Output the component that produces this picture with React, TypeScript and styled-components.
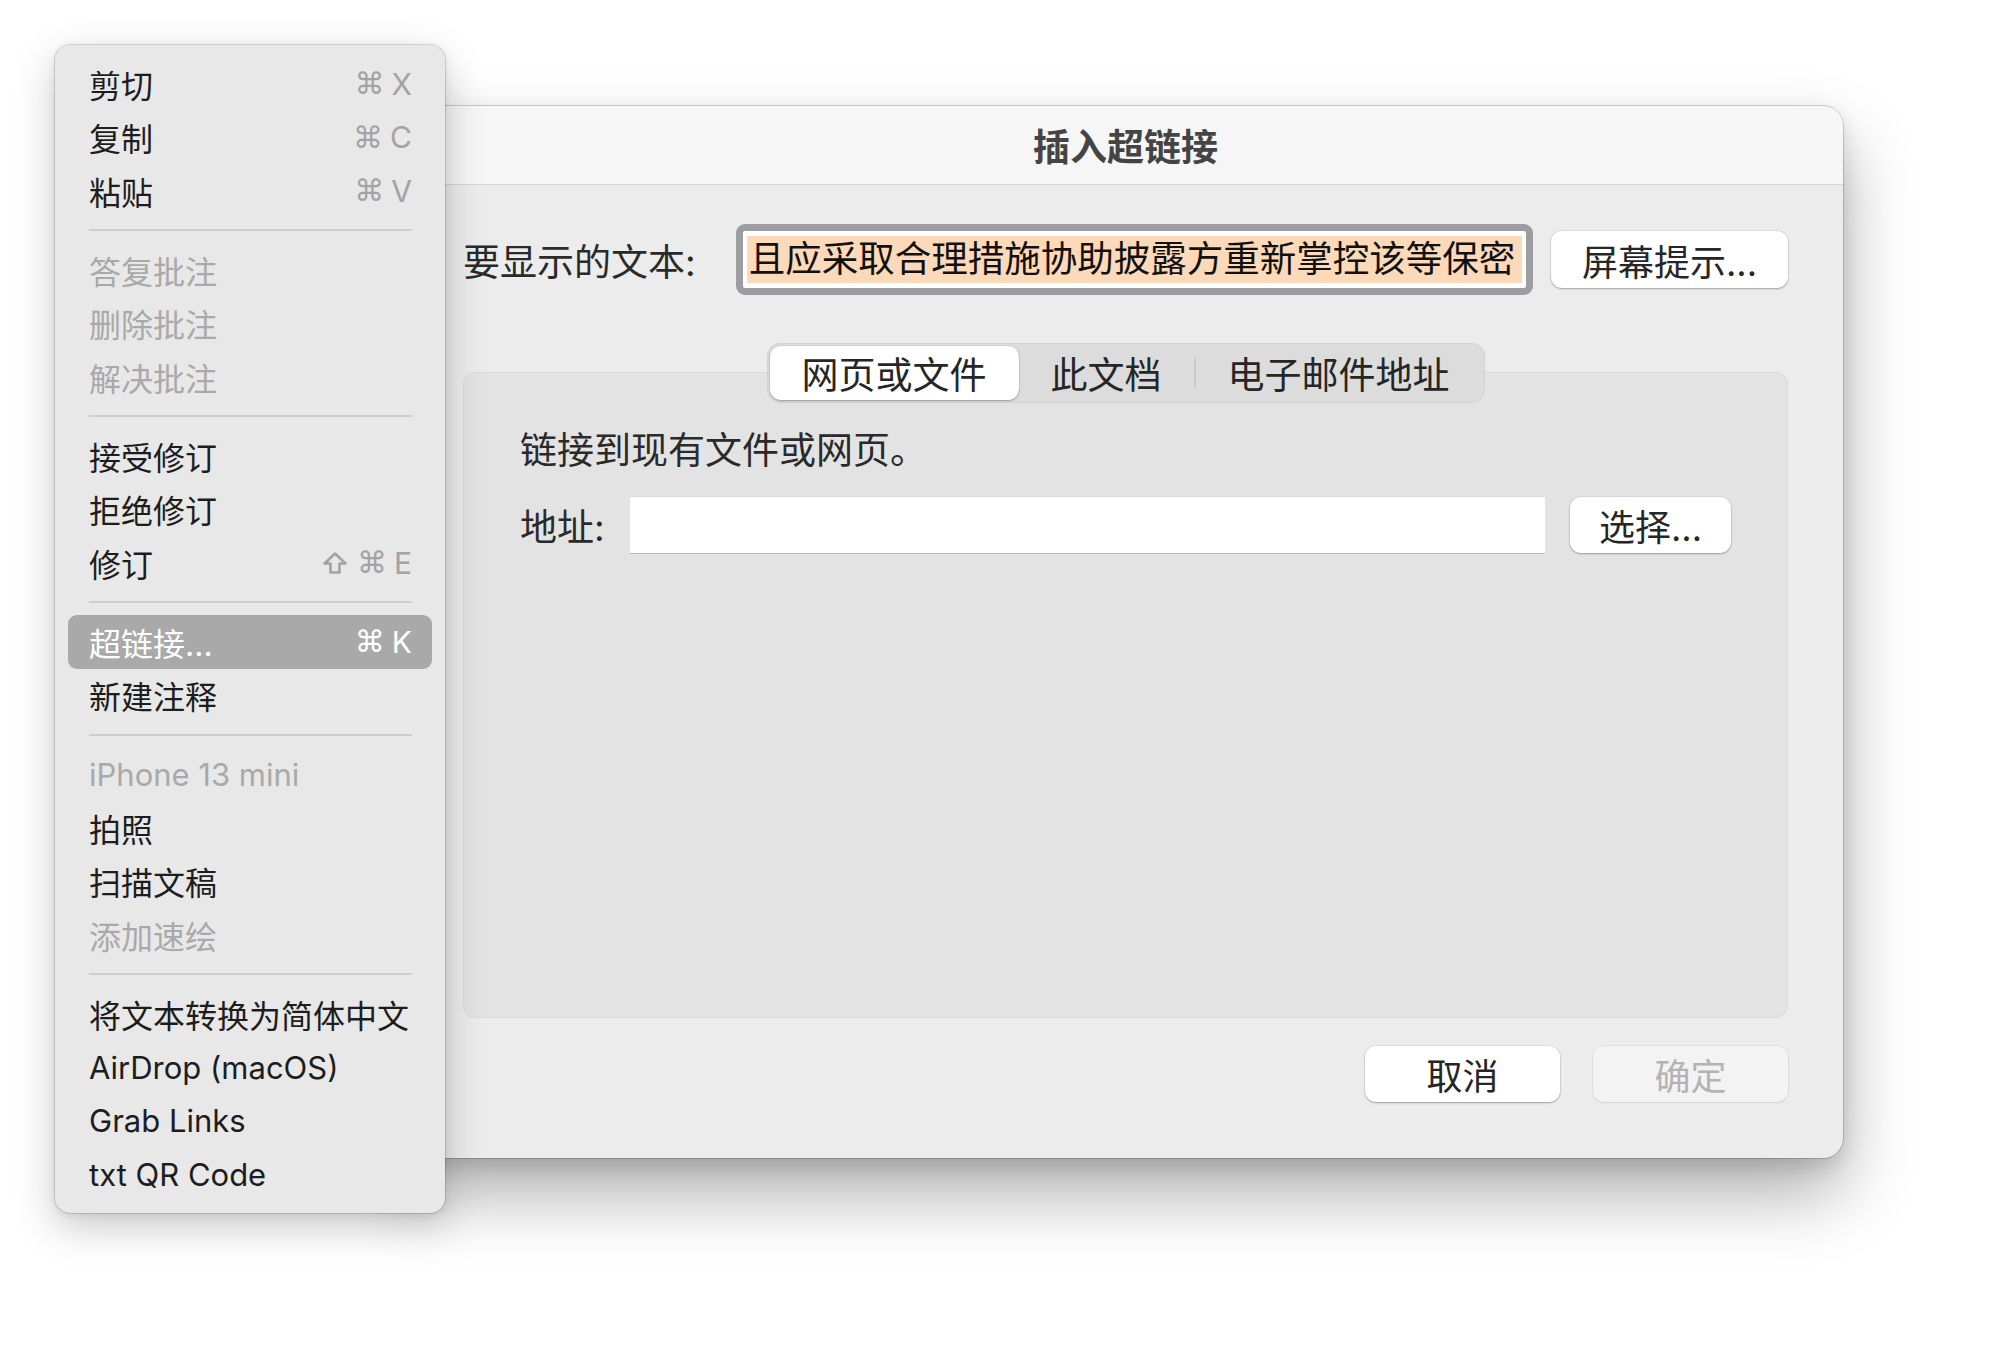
import React from "react"
import styled, { createGlobalStyle } from "styled-components"

const GlobalStyle = createGlobalStyle`
    html, body {
        margin: 0;
        padding: 0;
        background: #ffffff;
    }
    body {
        font-family: Inter, "Noto Sans CJK SC", "Noto Sans", sans-serif;
        -webkit-font-smoothing: antialiased;
    }
`

const Desktop = styled.div`
    position: relative;
    width: 2000px;
    height: 1365px;
    overflow: hidden;
    background: #ffffff;
`

/* ---------- dialog ---------- */

const Dialog = styled.div`
    position: absolute;
    left: 408px;
    top: 106px;
    width: 1435px;
    height: 1052px;
    display: flex;
    flex-direction: column;
    background: #ececec;
    border-radius: 20px;
    box-shadow: 0 0 0 1px rgba(0, 0, 0, 0.16), 0 36px 70px rgba(0, 0, 0, 0.32), 0 8px 20px rgba(0, 0, 0, 0.12);
    overflow: hidden;
    box-sizing: border-box;
`
const TitleBar = styled.div`
    height: 79px;
    flex: none;
    display: flex;
    align-items: center;
    justify-content: center;
    background: #f6f6f6;
    border-bottom: 1px solid #d6d6d6;
    box-sizing: border-box;
    font-size: 37px;
    font-weight: 700;
    color: #444444;
`
const DialogBody = styled.div`
    flex: 1;
    display: flex;
    flex-direction: column;
    padding: 39px 55px 56px 55px;
    box-sizing: border-box;
    font-size: 37px;
    color: #262626;
`
const TextRow = styled.div`
    display: flex;
    align-items: center;
    height: 71px;
`
const Label = styled.span<{ $gap: number }>`
    flex: none;
    margin-right: ${(p) => p.$gap}px;
    white-space: nowrap;
    color: #2a2a2a;
`
const FocusField = styled.div`
    flex: 1;
    min-width: 0;
    height: 71px;
    box-sizing: border-box;
    border: 7px solid #9c9ca1;
    border-radius: 9px;
    background: #ffffff;
    padding: 5px 4px;
    overflow: hidden;
`
const Selected = styled.div`
    height: 47px;
    line-height: 47px;
    padding-left: 2px;
    background: #fcd9b8;
    font-size: 36.5px;
    white-space: nowrap;
    overflow: hidden;
    color: #111111;
`
const PushButton = styled.button<{ $w: number; $disabled?: boolean }>`
    flex: none;
    width: ${(p) => p.$w}px;
    height: 56px;
    border: none;
    border-radius: 11px;
    background: ${(p) => (p.$disabled ? "#f3f3f3" : "#ffffff")};
    color: ${(p) => (p.$disabled ? "#b3b3b3" : "#262626")};
    box-shadow: ${(p) =>
        p.$disabled
            ? "0 0 0 1px rgba(0,0,0,0.04), 0 1px 2px rgba(0,0,0,0.08)"
            : "0 0 0 1px rgba(0,0,0,0.05), 0 1px 2px rgba(0,0,0,0.28)"};
    font-family: inherit;
    font-size: 36px;
    padding: 0;
    display: flex;
    align-items: center;
    justify-content: center;
`
const TipButton = styled(PushButton)`
    margin-left: 18px;
    height: 57px;
`
const TabArea = styled.div`
    margin-top: 48px;
    display: flex;
    flex-direction: column;
    align-items: center;
`
const Segmented = styled.div`
    position: relative;
    z-index: 1;
    display: flex;
    align-items: center;
    height: 60px;
    box-sizing: border-box;
    padding: 2px;
    margin-bottom: -31px;
    background: #dcdcdc;
    border: 1px solid #d2d2d2;
    border-radius: 13px;
`
const Tab = styled.div<{ $active?: boolean }>`
    height: 100%;
    display: flex;
    align-items: center;
    padding: 0 32px;
    border-radius: 11px;
    background: ${(p) => (p.$active ? "#ffffff" : "transparent")};
    box-shadow: ${(p) => (p.$active ? "0 1px 2px rgba(0,0,0,0.28), 0 0 0 1px rgba(0,0,0,0.04)" : "none")};
    color: #262626;
    white-space: nowrap;
`
const TabDivider = styled.div`
    width: 2px;
    height: 30px;
    background: #c9c9c9;
`
const Panel = styled.div`
    align-self: stretch;
    height: 646px;
    box-sizing: border-box;
    padding: 54px 56px 0 56px;
    background: #e3e3e3;
    border: 1px solid #dadada;
    border-radius: 12px;
    display: flex;
    flex-direction: column;
`
const PanelText = styled.div`
    line-height: 48px;
    color: #2a2a2a;
`
const AddressRow = styled.div`
    margin-top: 22px;
    display: flex;
    align-items: center;
    height: 56px;
`
const AddressField = styled.div`
    flex: 1;
    height: 56px;
    background: #ffffff;
    box-shadow: 0 1px 0 #b9b9b9, 0 -1px 0 #d9d9d9;
    margin-right: 25px;
`
const Footer = styled.div`
    margin-top: 28px;
    display: flex;
    justify-content: flex-end;
    gap: 33px;
`

/* ---------- context menu ---------- */

const Menu = styled.div`
    position: absolute;
    left: 55px;
    top: 45px;
    width: 390px;
    padding: 12px 0;
    box-sizing: border-box;
    background: #e8e8e8;
    border-radius: 15px;
    box-shadow: 0 0 0 1px rgba(0, 0, 0, 0.13), 0 14px 40px rgba(0, 0, 0, 0.22), 0 2px 8px rgba(0, 0, 0, 0.08);
    font-size: 32px;
    z-index: 5;
`
const MenuItem = styled.div<{ $disabled?: boolean; $active?: boolean }>`
    height: 53.5px;
    margin: 0 13px;
    padding: 0 20px 0 21px;
    display: flex;
    align-items: center;
    justify-content: space-between;
    border-radius: 9px;
    background: ${(p) => (p.$active ? "#a9a9a9" : "transparent")};
    color: ${(p) => (p.$active ? "#ffffff" : p.$disabled ? "#a9a9a9" : "#1d1d1d")};
    white-space: nowrap;
`
const ItemLabel = styled.span<{ $latin?: boolean }>`
    font-size: ${(p) => (p.$latin ? "31px" : "32px")};
`
const Shortcut = styled.span<{ $active?: boolean }>`
    display: flex;
    align-items: center;
    gap: 7px;
    color: ${(p) => (p.$active ? "#ffffff" : "#a3a3a3")};
    font-size: 30px;
`
const KeySymbol = styled.span`
    font-family: "DejaVu Sans", sans-serif;
    font-size: 30px;
`
const ShiftIcon = styled.svg`
    width: 26px;
    height: 24px;
    margin-right: 2px;
`
const MenuSeparator = styled.div`
    height: 25.5px;
    display: flex;
    align-items: center;
    padding: 0 33px 0 34px;
    &::after {
        content: "";
        flex: 1;
        height: 2px;
        background: #cdcdcd;
    }
`

const Shift = () => (
    <ShiftIcon viewBox="0 0 26 24" fill="none" stroke="currentColor" strokeWidth="2.6" strokeLinejoin="round">
        <path d="M13 2.5 L23.5 12.5 H17.5 V21.5 H8.5 V12.5 H2.5 Z" />
    </ShiftIcon>
)

type Entry =
    | { sep: true }
    | { sep?: false; label: string; keys?: string[]; disabled?: boolean; active?: boolean }

const entries: Entry[] = [
    { label: "剪切", keys: ["⌘", "X"] },
    { label: "复制", keys: ["⌘", "C"] },
    { label: "粘贴", keys: ["⌘", "V"] },
    { sep: true },
    { label: "答复批注", disabled: true },
    { label: "删除批注", disabled: true },
    { label: "解决批注", disabled: true },
    { sep: true },
    { label: "接受修订" },
    { label: "拒绝修订" },
    { label: "修订", keys: ["⇧", "⌘", "E"] },
    { sep: true },
    { label: "超链接...", keys: ["⌘", "K"], active: true },
    { label: "新建注释" },
    { sep: true },
    { label: "iPhone 13 mini", disabled: true },
    { label: "拍照" },
    { label: "扫描文稿" },
    { label: "添加速绘", disabled: true },
    { sep: true },
    { label: "将文本转换为简体中文" },
    { label: "AirDrop (macOS)" },
    { label: "Grab Links" },
    { label: "txt QR Code" },
]

const renderKey = (k: string, j: number) => {
    if (k === "⇧") return <Shift key={j} />
    if (/[A-Z]/.test(k)) return <span key={j}>{k}</span>
    return <KeySymbol key={j}>{k}</KeySymbol>
}

const ContextMenu = () => (
    <Menu>
        {entries.map((e, i) =>
            e.sep ? (
                <MenuSeparator key={i} />
            ) : (
                <MenuItem key={i} $disabled={e.disabled} $active={e.active}>
                    <ItemLabel $latin={/^[A-Za-z]/.test(e.label)}>{e.label}</ItemLabel>
                    {e.keys && <Shortcut $active={e.active}>{e.keys.map(renderKey)}</Shortcut>}
                </MenuItem>
            )
        )}
    </Menu>
)

const HyperlinkDialog = () => (
    <Dialog>
        <TitleBar>插入超链接</TitleBar>
        <DialogBody>
            <TextRow>
                <Label $gap={40}>要显示的文本:</Label>
                <FocusField>
                    <Selected>且应采取合理措施协助披露方重新掌控该等保密</Selected>
                </FocusField>
                <TipButton $w={237}>屏幕提示...</TipButton>
            </TextRow>
            <TabArea>
                <Segmented>
                    <Tab $active>网页或文件</Tab>
                    <Tab>此文档</Tab>
                    <TabDivider />
                    <Tab>电子邮件地址</Tab>
                </Segmented>
                <Panel>
                    <PanelText>链接到现有文件或网页。</PanelText>
                    <AddressRow>
                        <Label $gap={25}>地址:</Label>
                        <AddressField />
                        <PushButton $w={161}>选择...</PushButton>
                    </AddressRow>
                </Panel>
            </TabArea>
            <Footer>
                <PushButton $w={195}>取消</PushButton>
                <PushButton $w={195} $disabled>确定</PushButton>
            </Footer>
        </DialogBody>
    </Dialog>
)

export default function App() {
    return (
        <Desktop>
            <GlobalStyle />
            <HyperlinkDialog />
            <ContextMenu />
        </Desktop>
    )
}
